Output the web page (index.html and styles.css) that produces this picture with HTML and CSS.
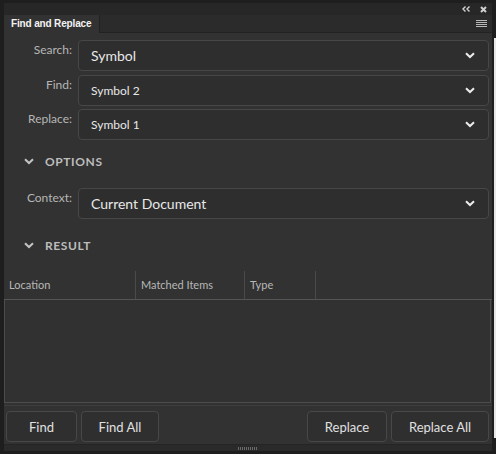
FILE: index.html
```html
<!DOCTYPE html>
<html lang="en">
<head>
  <meta charset="UTF-8">
  <title>Find and Replace</title>
  <link rel="stylesheet" href="styles.css">
</head>
<body>
  <div class="panel">
    <!-- window controls -->
    <div class="titlebar">
      <svg class="collapse" width="8" height="6" viewBox="0 0 8 6"><path d="M3.5 0.5L1 3L3.5 5.5M7.5 0.5L5 3L7.5 5.5" fill="none" stroke="#d4d4d4" stroke-width="1.4"/></svg>
      <svg class="close" width="7" height="7" viewBox="0 0 7 7"><path d="M1 1L6 6M6 1L1 6" stroke="#d0d0d0" stroke-width="2"/></svg>
    </div>
    <div class="tabs">
      <div class="tab">Find and Replace</div>
      <svg class="menu" width="11" height="8" viewBox="0 0 11 8"><path d="M0 0.5H11M0 2.5H11M0 4.5H11M0 6.5H11" stroke="#b8b8b8" stroke-width="1"/></svg>
    </div>

    <div class="content">
      <div class="field">
        <label>Search:</label>
        <div class="select big">Symbol<svg class="chev" width="10" height="7" viewBox="0 0 10 7"><path d="M1 1.2L5 5L9 1.2" fill="none" stroke="#ececec" stroke-width="2"/></svg></div>
      </div>
      <div class="field">
        <label>Find:</label>
        <div class="select">Symbol 2<svg class="chev" width="10" height="7" viewBox="0 0 10 7"><path d="M1 1.2L5 5L9 1.2" fill="none" stroke="#ececec" stroke-width="2"/></svg></div>
      </div>
      <div class="field">
        <label>Replace:</label>
        <div class="select">Symbol 1<svg class="chev" width="10" height="7" viewBox="0 0 10 7"><path d="M1 1.2L5 5L9 1.2" fill="none" stroke="#ececec" stroke-width="2"/></svg></div>
      </div>

      <div class="section">
        <svg width="10" height="7" viewBox="0 0 10 7"><path d="M1 1.2L5 5L9 1.2" fill="none" stroke="#c4c4c4" stroke-width="2"/></svg>
        <span>OPTIONS</span>
      </div>
      <div class="field context">
        <label>Context:</label>
        <div class="select big">Current Document<svg class="chev" width="10" height="7" viewBox="0 0 10 7"><path d="M1 1.2L5 5L9 1.2" fill="none" stroke="#ececec" stroke-width="2"/></svg></div>
      </div>

      <div class="section result">
        <svg width="10" height="7" viewBox="0 0 10 7"><path d="M1 1.2L5 5L9 1.2" fill="none" stroke="#c4c4c4" stroke-width="2"/></svg>
        <span>RESULT</span>
      </div>
    </div>

    <!-- results table -->
    <div class="table-head">
      <div class="col loc">Location</div>
      <div class="col items">Matched Items</div>
      <div class="col type">Type</div>
    </div>
    <div class="table-body"></div>

    <div class="actions">
      <button class="btn w-find">Find</button>
      <button class="btn w-findall">Find All</button>
      <div class="spacer"></div>
      <button class="btn w-replace">Replace</button>
      <button class="btn w-replaceall">Replace All</button>
    </div>
    <div class="grip"><span></span></div>
  </div>
  <div class="edge"></div>
</body>
</html>
```

FILE: styles.css
```css
* {
  box-sizing: border-box;
}
body {
  margin: 0;
  width: 496px;
  height: 454px;
  background-color: #1e1e1e;
  font-family: Lato, "Open Sans", sans-serif;
  color: #e4e4e4;
  overflow: hidden;
  position: relative;
}
.panel {
  margin: 3px 0 0 4px;
  width: 488px;
  height: 448px;
  background-color: #323232;
  display: flex;
  flex-direction: column;
}
.titlebar {
  height: 12px;
  background-color: #272727;
  display: flex;
  align-items: center;
  justify-content: flex-end;
  gap: 10px;
  padding-right: 5px;
}
.tabs {
  height: 18px;
  background-color: #2b2b2b;
  border-bottom: 1px solid #222;
  display: flex;
  align-items: stretch;
  justify-content: space-between;
}
.tab {
  width: 96px;
  background-color: #323232;
  border-right: 1px solid #222;
  margin-bottom: -1px;
  font-family: "Liberation Sans", Arial, sans-serif;
  font-size: 10px;
  font-weight: bold;
  color: #f2f2f2;
  letter-spacing: -0.15px;
  padding: 3px 0 0 7px;
}
.menu {
  align-self: center;
  margin-right: 5px;
}
.content {
  padding: 7px 3px 0 0;
}
.field {
  display: grid;
  grid-template-columns: 68px 1fr;
  column-gap: 6px;
  margin-bottom: 3.5px;
}
.field label {
  text-align: right;
  font-size: 12px;
  color: #b6b6b6;
  padding-top: 2px;
}
.select {
  height: 31px;
  border: 1px solid #474747;
  border-radius: 4px;
  background-color: #2e2e2e;
  display: flex;
  align-items: center;
  justify-content: space-between;
  padding: 0 13px 0 12px;
  font-size: 12px;
  color: #e8e8e8;
}
.select.big {
  font-size: 14px;
}
.section {
  display: flex;
  align-items: center;
  gap: 11px;
  height: 22px;
  margin: 10px 0 16px 20px;
  font-size: 12px;
  font-weight: bold;
  color: #bdbdbd;
  letter-spacing: 0.6px;
}
.section.result {
  margin-top: 15px;
  margin-bottom: 14px;
}
.table-head {
  height: 30px;
  display: flex;
  border-bottom: 1px solid #555;
  align-items: center;
}
.col {
  height: 28px;
  display: flex;
  align-items: center;
  font-size: 11px;
  color: #b8b8b8;
  border-right: 1px solid #4a4a4a;
  padding-left: 5px;
}
.col.loc {
  width: 132px;
}
.col.items {
  width: 109px;
}
.col.type {
  width: 71px;
}
.table-body {
  height: 103px;
  border: 1px solid #4d4d4d;
  border-top: none;
  margin-right: 1px;
  background-color: #313131;
}
.actions {
  display: flex;
  gap: 4px;
  padding: 5px 3px 0 2px;
  height: 39px;
  border-top: 1px solid #3e3e3e;
  margin-top: 2px;
}
.spacer {
  flex: 1;
}
.btn {
  height: 31px;
  border: 1px solid #484848;
  border-radius: 4px;
  background-color: #2f2f2f;
  color: #e0e0e0;
  font-family: Lato, sans-serif;
  font-size: 13px;
  padding: 0;
}
.w-find { width: 71px; }
.w-findall { width: 78px; }
.w-replace { width: 80px; }
.w-replaceall { width: 98px; }
.grip {
  flex: 1;
  background-color: #2a2a2a;
  border-top: 1px solid #252525;
  display: flex;
  justify-content: center;
  padding-top: 2px;
}
.grip span {
  width: 20px;
  height: 3px;
  background: repeating-linear-gradient(to right, #6a6a6a 0 1px, transparent 1px 2px);
}
.edge {
  position: absolute;
  right: 0;
  top: 38px;
  width: 2px;
  height: 400px;
  background-color: #e8e8e8;
}
```
